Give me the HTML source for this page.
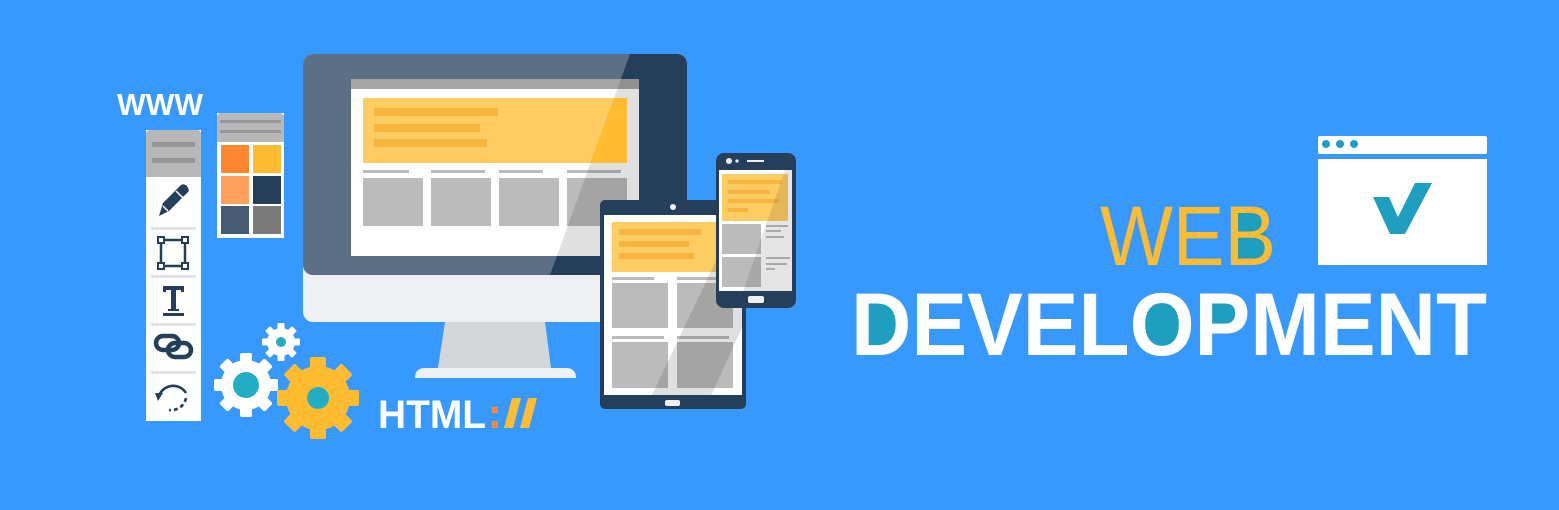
<!DOCTYPE html>
<html><head><meta charset="utf-8"><style>
html,body{margin:0;padding:0;background:#3799fd;width:1559px;height:510px;overflow:hidden}
svg{display:block}
</style></head><body>
<svg width="1559" height="510" viewBox="0 0 1559 510" xmlns="http://www.w3.org/2000/svg">
<rect width="1559" height="510" fill="#3799fd"/>
<defs>
<clipPath id="scr"><rect x="351" y="79" width="288" height="177"/></clipPath>
<clipPath id="mon"><rect x="303" y="54" width="384" height="221" rx="10"/></clipPath>
<clipPath id="tab"><rect x="604" y="215" width="138" height="180"/></clipPath>
<clipPath id="ph"><rect x="719" y="170" width="73" height="121"/></clipPath>
</defs>

<text x="117" y="115" font-family="Liberation Sans, sans-serif" font-weight="bold" font-size="31" fill="#fff" textLength="86" lengthAdjust="spacingAndGlyphs">WWW</text>

<rect x="146" y="130" width="55" height="291" fill="#fff"/>
<path d="M146 177 V134 a4 4 0 0 1 4 -4 H197 a4 4 0 0 1 4 4 V177Z" fill="#b8b8b8"/>
<rect x="152" y="142" width="43" height="5" fill="#979797"/>
<rect x="152" y="158" width="43" height="5" fill="#979797"/>
<g fill="#e3e3e3"><rect x="151" y="227" width="45" height="3"/><rect x="151" y="275" width="45" height="3"/><rect x="151" y="323" width="45" height="3"/><rect x="151" y="371" width="45" height="3"/></g>
<g fill="#253e5a" stroke="#253e5a">
<path d="M159 216 L163 203 L181 185 Q184 183 187 186 L188 188 Q190 191 187 193 L169 211 Z" stroke="none"/>
<path d="M163 206 L168 211" stroke="#fff" stroke-width="1.5" fill="none"/>
<path d="M176 191 L183 198" stroke="#fff" stroke-width="1.5" fill="none"/>
<rect x="161" y="240" width="24" height="26" fill="none" stroke-width="2.5"/>
<rect x="158" y="237" width="6" height="6" fill="#fff" stroke-width="2"/>
<rect x="182" y="237" width="6" height="6" fill="#fff" stroke-width="2"/>
<rect x="158" y="263" width="6" height="6" fill="#fff" stroke-width="2"/>
<rect x="182" y="263" width="6" height="6" fill="#fff" stroke-width="2"/>
<path d="M163 286 H184 V292 H181 V290 H176 V309 H179 V311 H168 V309 H171 V290 H166 V292 H163 Z" stroke="none"/>
<rect x="163" y="313" width="21" height="3" stroke="none"/>
<rect x="156" y="336" width="23" height="14" rx="7" fill="none" stroke-width="4.5"/>
<rect x="168" y="343" width="23" height="14" rx="7" fill="none" stroke-width="4.5"/>
<path d="M159 396 A15 15 0 0 1 186 393" fill="none" stroke-width="2.6"/>
<path d="M186 398 A15 15 0 0 1 169 410" fill="none" stroke-width="2.6" stroke-dasharray="4 3"/>
<path d="M155 393 L163 393 L158 401 Z" stroke="none"/>
</g>

<rect x="217" y="113" width="67" height="125" fill="#fff"/>
<path d="M217 142 V117 a4 4 0 0 1 4 -4 H280 a4 4 0 0 1 4 4 V142Z" fill="#b8b8b8"/>
<rect x="220" y="120" width="61" height="3" fill="#979797"/>
<rect x="220" y="130" width="61" height="3" fill="#979797"/>
<rect x="221" y="145" width="28" height="28" fill="#ff8730"/>
<rect x="253" y="145" width="28" height="28" fill="#ffbc30"/>
<rect x="221" y="176" width="28" height="28" fill="#ffa15c"/>
<rect x="253" y="176" width="28" height="28" fill="#253e5a"/>
<rect x="221" y="206" width="28" height="28" fill="#475b73"/>
<rect x="253" y="206" width="28" height="28" fill="#7b7b7b"/>

<rect x="303" y="54" width="384" height="268" rx="10" fill="#eef0f2"/>
<g clip-path="url(#mon)">
<rect x="303" y="54" width="384" height="221" fill="#5c6f84"/>
<polygon points="630,54 700,54 700,275 550,275" fill="#253e5a"/>
</g>
<rect x="351" y="79" width="288" height="177" fill="#fff"/>
<rect x="351" y="79" width="288" height="10" fill="#a6a6a6"/>
<rect x="363" y="98" width="264" height="65" fill="#fdcd63"/>
<g fill="#f6b440"><rect x="374" y="108" width="124" height="8"/><rect x="374" y="124" width="106" height="8"/><rect x="374" y="139" width="113" height="8"/></g>
<g fill="#bbb">
<rect x="363" y="170" width="46" height="3"/><rect x="431" y="170" width="54" height="3"/><rect x="499" y="170" width="44" height="3"/><rect x="567" y="170" width="54" height="3"/>
<rect x="363" y="178" width="60" height="48"/><rect x="431" y="178" width="60" height="48"/><rect x="499" y="178" width="60" height="48"/><rect x="567" y="178" width="60" height="48"/>
</g>
<g clip-path="url(#scr)"><polygon points="630,54 700,54 700,275 550,275" fill="#000" opacity="0.12"/></g>
<polygon points="614,98 627,98 627,163 590,163" fill="#ffbc30"/>
<polygon points="445,322 545,322 551,368 438,368" fill="#d3d7d9"/>
<path d="M415 378 Q415 368 425 368 H566 Q576 368 576 378Z" fill="#eef0f2"/>

<rect x="600" y="200" width="146" height="209" rx="5" fill="#253e5a"/>
<circle cx="673" cy="207" r="3" fill="#eef0f2"/>
<rect x="604" y="215" width="138" height="180" fill="#fff"/>
<rect x="612" y="222" width="130" height="50" fill="#fdcd63"/>
<g fill="#f6b440"><rect x="619" y="229" width="82" height="6"/><rect x="619" y="241" width="70" height="6"/><rect x="619" y="253" width="75" height="6"/></g>
<g fill="#bbb">
<rect x="612" y="277" width="42" height="3"/><rect x="677" y="277" width="50" height="3"/>
<rect x="612" y="283" width="56" height="45"/><rect x="677" y="283" width="56" height="45"/>
<rect x="612" y="336" width="52" height="3"/><rect x="677" y="336" width="52" height="3"/>
<rect x="612" y="342" width="56" height="46"/><rect x="677" y="342" width="56" height="46"/>
</g>
<g clip-path="url(#tab)"><polygon points="745,200 800,200 700,420 640,420" fill="#000" opacity="0.12"/></g>
<rect x="665" y="400" width="15" height="6" rx="2" fill="#eef0f2"/>

<rect x="716" y="153" width="80" height="155" rx="8" fill="#253e5a"/>
<circle cx="729" cy="161" r="3" fill="#eef0f2"/><circle cx="737" cy="161" r="1.6" fill="#eef0f2"/>
<rect x="747" y="160" width="17" height="2" fill="#eef0f2"/>
<rect x="719" y="170" width="73" height="121" fill="#fff"/>
<rect x="722" y="174" width="66" height="47" fill="#fdcd63"/>
<g fill="#f6b440"><rect x="728" y="180" width="54" height="4"/><rect x="728" y="190" width="42" height="4"/><rect x="728" y="199" width="51" height="4"/><rect x="728" y="208" width="20" height="4"/></g>
<g fill="#bbb">
<rect x="722" y="224" width="39" height="30"/><rect x="722" y="257" width="39" height="30"/>
<rect x="766" y="225" width="22" height="2"/><rect x="766" y="230" width="15" height="2"/><rect x="766" y="236" width="18" height="2"/>
<rect x="766" y="257" width="24" height="2"/><rect x="766" y="263" width="21" height="2"/><rect x="766" y="268" width="9" height="2"/>
</g>
<g clip-path="url(#ph)"><polygon points="785,170 800,170 800,300 740,300" fill="#000" opacity="0.1"/></g>
<rect x="748" y="296" width="16" height="7" rx="2" fill="#eef0f2"/>

<g fill="#fff" transform="translate(246,385)">
<circle r="25"/>
<rect x="-6" y="-32" width="12" height="64" rx="2"/><rect x="-6" y="-32" width="12" height="64" rx="2" transform="rotate(45)"/><rect x="-6" y="-32" width="12" height="64" rx="2" transform="rotate(90)"/><rect x="-6" y="-32" width="12" height="64" rx="2" transform="rotate(135)"/>
<circle r="13" fill="#23adc5"/>
</g>
<g fill="#fff" transform="translate(281,342)">
<circle r="14"/>
<rect x="-3.5" y="-19" width="7" height="38" rx="1"/><rect x="-3.5" y="-19" width="7" height="38" rx="1" transform="rotate(45)"/><rect x="-3.5" y="-19" width="7" height="38" rx="1" transform="rotate(90)"/><rect x="-3.5" y="-19" width="7" height="38" rx="1" transform="rotate(135)"/>
<circle r="5" fill="#23adc5"/>
</g>
<g fill="#ffbc30" transform="translate(318,398)">
<circle r="32"/>
<rect x="-8" y="-41" width="16" height="82" rx="2"/><rect x="-8" y="-41" width="16" height="82" rx="2" transform="rotate(45)"/><rect x="-8" y="-41" width="16" height="82" rx="2" transform="rotate(90)"/><rect x="-8" y="-41" width="16" height="82" rx="2" transform="rotate(135)"/>
<circle r="11" fill="#23adc5"/>
</g>

<text x="378" y="428" font-family="Liberation Sans, sans-serif" font-weight="bold" font-size="40" fill="#fff" textLength="108" lengthAdjust="spacingAndGlyphs">HTML</text>
<rect x="492" y="407" width="6" height="6" fill="#ff8730"/><rect x="492" y="421" width="6" height="7" fill="#ff8730"/>
<polygon points="512,398 521,398 513,428 504,428" fill="#ffbc30"/>
<polygon points="528,398 537,398 529,428 520,428" fill="#ffbc30"/>

<rect x="1318" y="136" width="169" height="18" rx="2" fill="#fff"/>
<g fill="#1e9fbf"><circle cx="1326" cy="144" r="4"/><circle cx="1340" cy="144" r="4"/><circle cx="1354" cy="144" r="4"/></g>
<rect x="1318" y="159" width="169" height="106" fill="#fff"/>
<polygon points="1373,197 1389,197 1398,217 1415,183 1432,183 1405,234 1390,234" fill="#1e9fbf"/>

<g fill="#1e9fbf">
<rect x="1236" y="210" width="30" height="50"/>
<rect x="866" y="300" width="30" height="47"/>
<rect x="1143" y="299" width="38" height="50"/>
<rect x="1212" y="300" width="24" height="24"/>
</g>
<text x="1100" y="265" font-family="Liberation Sans, sans-serif" font-size="84" fill="#ffbc30" textLength="176" lengthAdjust="spacingAndGlyphs">WEB</text>
<text x="851" y="355" font-family="Liberation Sans, sans-serif" font-weight="bold" font-size="89" fill="#fff" textLength="636" lengthAdjust="spacingAndGlyphs">DEVELOPMENT</text>
</svg>
</body></html>
